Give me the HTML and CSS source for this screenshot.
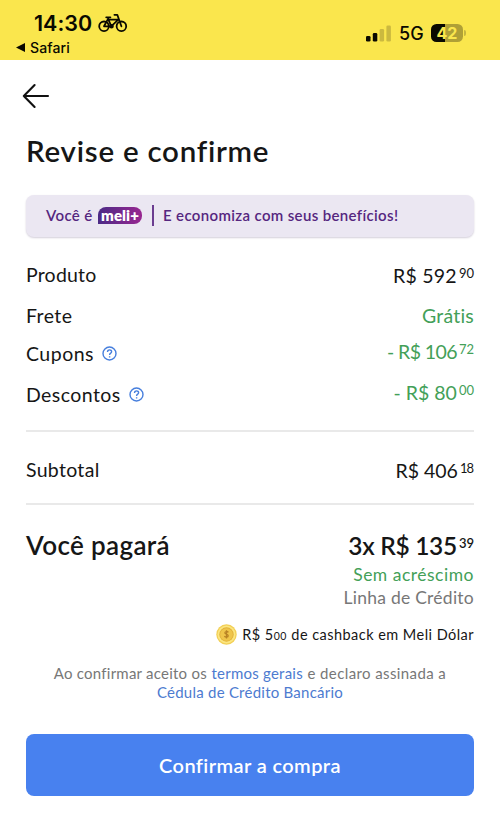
FILE: index.html
```html
<!DOCTYPE html>
<html lang="pt-BR">
<head>
<meta charset="utf-8">
<title>Revise e confirme</title>
<link rel="stylesheet" href="styles.css">
</head>
<body>
<header class="status">
  <div class="status-left">
    <div class="clock"><span class="time">14:30</span>
      <svg class="bike" width="30" height="20" viewBox="0 0 30 20" fill="none" stroke="#0a0900" stroke-width="1.8" stroke-linecap="round" stroke-linejoin="round"><circle cx="6" cy="13.3" r="4.8"/><circle cx="23.4" cy="13.3" r="4.8"/><path d="M6 13.3 10.2 5.6M8.2 4.3h4.2M6 13.3h7.2L20 6.8M13.4 13.3 10.4 6.6h9.4M23.4 13.3 19.3 1.8H16.4"/><circle cx="13.5" cy="13.3" r="1.4" fill="#0a0900"/></svg>
    </div>
    <div class="back-app"><svg width="9" height="9" viewBox="0 0 9 9"><path d="M0 4.5 9 0v9z" fill="#0a0900"/></svg><span class="safari">Safari</span></div>
  </div>
  <div class="status-right">
    <svg class="signal" width="26" height="17" viewBox="0 0 26 17"><g fill="#0a0900"><rect x="0" y="11" width="4.5" height="5.6" rx="1.3"/><rect x="6.8" y="8" width="4.5" height="8.6" rx="1.3"/></g><g fill="#cbb93f"><rect x="13.6" y="4" width="4.5" height="12.6" rx="1.3"/><rect x="20.4" y="0.5" width="4.5" height="16.1" rx="1.3"/></g></svg>
    <span class="net">5G</span>
    <span class="battery"><span class="level">42</span><i class="cap"></i></span>
  </div>
</header>
<main class="page">
  <svg class="back" width="28" height="26" viewBox="0 0 28 26" fill="none" stroke="#111" stroke-width="2.1" stroke-linecap="round" stroke-linejoin="round"><path d="M12.6 2 1.8 13l10.8 11M1.8 13H26"/></svg>
  <h1 class="title"><span>Revise e confirme</span></h1>
  <div class="banner"><span class="you">Você é</span><span class="meli">meli+</span><i class="bar"></i><span class="save">E economiza com seus benefícios!</span></div>
  <div class="row produto"><span class="label">Produto</span><span class="price down">R$ 592<sup>90</sup></span></div>
  <div class="row frete"><span class="label">Frete</span><span class="price green gratis">Grátis</span></div>
  <div class="row cupons"><span class="label">Cupons</span><svg class="help" width="15" height="15" viewBox="0 0 15 15" fill="none" stroke="#477fdd" stroke-width="1.4"><circle cx="7.5" cy="7.5" r="6.5"/><path d="M5.5 6c0-3 4.2-2.6 4.1-.2C9.6 7.3 7.6 7.1 7.6 9M7.6 10.2v1.4"/></svg><span class="price green up tight">- R$ 106<sup>72</sup></span></div>
  <div class="row descontos"><span class="label">Descontos</span><svg class="help" width="15" height="15" viewBox="0 0 15 15" fill="none" stroke="#477fdd" stroke-width="1.4"><circle cx="7.5" cy="7.5" r="6.5"/><path d="M5.5 6c0-3 4.2-2.6 4.1-.2C9.6 7.3 7.6 7.1 7.6 9M7.6 10.2v1.4"/></svg><span class="price green up">- R$ 80<sup>00</sup></span></div>
  <hr>
  <div class="row subtotal"><span class="label">Subtotal</span><span class="price down">R$ 406<sup class="narrow">18</sup></span></div>
  <hr class="second">
  <div class="row total"><span class="pay">Você pagará</span><span class="amount">3x R$ 135<sup>39</sup></span></div>
  <div class="note surcharge green"><span>Sem acréscimo</span></div>
  <div class="note grey"><span>Linha de Crédito</span></div>
  <div class="cashback">
    <svg width="21" height="21" viewBox="0 0 21 21"><circle cx="10.5" cy="10.5" r="10.2" fill="#f2cf55"/><circle cx="10.5" cy="10.5" r="9" fill="#fce680"/><circle cx="10.5" cy="10.5" r="7.2" fill="#e0b03a"/><circle cx="10.5" cy="10.5" r="6.3" fill="#efc54a"/><path d="M12.4 8.3c-1-1.3-3.6-.9-3.5.6.2 1.5 3.3 1.1 3.3 2.9 0 1.6-2.8 1.8-3.8.4M10.5 6.3v8.2" fill="none" stroke="#b98325" stroke-width="1.3"/></svg>
    <span class="cash-value">R$ 5<small>00</small></span><span class="cash-text">de cashback em Meli Dólar</span>
  </div>
  <div class="legal"><div class="legal-line"><span>Ao confirmar aceito os</span><a>termos gerais</a><span class="declare">e declaro assinada a</span></div><div class="legal-line"><a>Cédula de Crédito Bancário</a></div></div>
  <button class="confirm"><span>Confirmar a compra</span></button>
</main>
</body>
</html>
```
FILE: styles.css
```css
* { box-sizing: border-box; }
body { margin: 0; width: 500px; height: 817px; overflow: hidden; background: #fff; color: #161616; font-family: Lato, "Open Sans", sans-serif; font-variant-ligatures: none; }
.status { height: 60px; background: #fae64d; display: flex; justify-content: space-between; color: #0a0900; font-family: Inter, sans-serif; }
.status-left { padding: 9px 0 0 16px; }
.clock { display: flex; height: 28px; align-items: center; padding-left: 18px; }
.time { font-size: 21.5px; font-weight: 600; width: 58px; margin-right: 6px; white-space: nowrap; }
.back-app { display: flex; align-items: center; height: 20px; gap: 5px; font-size: 14px; font-weight: 500; letter-spacing: 0.15px; }
.status-right { display: flex; align-items: center; height: 20px; margin: 23px 37px 0 0; }
.signal { margin-right: 7px; }
.net { font-size: 18px; font-weight: 500; width: 24px; margin-right: 8px; }
.battery { position: relative; display: flex; align-items: center; justify-content: center; width: 32px; height: 18px; border-radius: 5.5px; background: linear-gradient(90deg, #0a0900 0 14px, #afa036 14px); color: #fae64d; font-size: 16px; font-weight: 700; }
.cap { position: absolute; right: -3px; top: 6px; width: 2px; height: 6px; border-radius: 0 2px 2px 0; background: #c5b63e; }
.page { padding: 0 26px; display: flex; flex-direction: column; }
.back { margin: 23px 0 0 -4px; }
.title { margin: 24px 0 0; height: 36px; line-height: 36px; font-size: 29.5px; font-weight: 600; letter-spacing: 0.75px; white-space: nowrap; }
.banner { margin-top: 26px; height: 42px; border-radius: 8px; background: #ebe7f2; box-shadow: 0 1px 2px #d3cfda; display: flex; align-items: center; padding: 0 0 2px 20px; color: #55267f; font-size: 15px; font-weight: 600; letter-spacing: 0.35px; white-space: nowrap; }
.meli { margin-left: 5.5px; width: 44px; height: 17px; line-height: 16px; border-radius: 8px 8px 8px 0; text-align: center; color: #fff; font-weight: 800; letter-spacing: 0.1px; background: linear-gradient(90deg, #4b2a86, #982690); }
.bar { width: 1.5px; height: 21px; margin: 0 9.5px 0 10px; background: #6b3c90; }
.row { display: flex; align-items: center; height: 28px; white-space: nowrap; }
.label, .price { font-size: 19.5px; }
.label { letter-spacing: 0.42px; }
.price, .amount { margin-left: auto; }
sup { font-size: 13px; line-height: 0; vertical-align: 5px; margin-left: 2px; letter-spacing: 0; }
.narrow { letter-spacing: -1px; margin-right: 1px; }
.green { color: #43a058; }
.help { margin-left: 8px; }
.produto { margin-top: 23px; }
.produto .label { letter-spacing: 0.2px; }
.frete { margin-top: 13px; }
.cupons { margin-top: 10px; }
.cupons .label { letter-spacing: 0.5px; }
.descontos { margin-top: 13px; }
.up { margin-bottom: 4px; }
.down { margin-top: 2px; letter-spacing: 0.25px; }
.subtotal .label { letter-spacing: 0.3px; }
.subtotal .price { letter-spacing: 0; }
.gratis { letter-spacing: 0.2px; }
.tight { letter-spacing: -0.6px; }
hr { width: 100%; height: 2px; border: 0; margin: 22px 0 0; background: #e9e9e9; }
.subtotal { margin-top: 23px; }
.subtotal .narrow { letter-spacing: -1px; }
.second { margin-top: 20px; }
.total { margin-top: 24px; height: 32px; font-size: 24.5px; font-weight: 600; }
.pay { font-size: 26px; letter-spacing: 0.35px; }
.amount { letter-spacing: -0.3px; }
.amount sup { vertical-align: 7px; }
.note { display: flex; justify-content: flex-end; height: 23px; line-height: 23px; font-size: 17.5px; }
.surcharge { margin-top: 2px; letter-spacing: 0.5px; }
.grey { color: #777; letter-spacing: 0.25px; }
.cashback { display: flex; justify-content: flex-end; align-items: center; height: 22px; margin-top: 14px; font-size: 14.5px; letter-spacing: 0.46px; white-space: nowrap; }
.cash-value { margin: 0 4.5px 0 5px; }
small { font-size: 10.5px; vertical-align: 0.5px; }
.legal { margin-top: 19px; font-size: 15px; line-height: 19px; color: #777; letter-spacing: 0.24px; }
.legal-line { display: flex; justify-content: center; gap: 4.5px; white-space: nowrap; }
.declare { letter-spacing: 0.4px; }
.legal a { color: #4d7bd0; }
.confirm { margin: 32px 0 0; padding: 0; height: 62px; border: 0; border-radius: 8px; background: #4881ef; color: #fff; font: 600 20px Lato, sans-serif; letter-spacing: 0.4px; }
```
